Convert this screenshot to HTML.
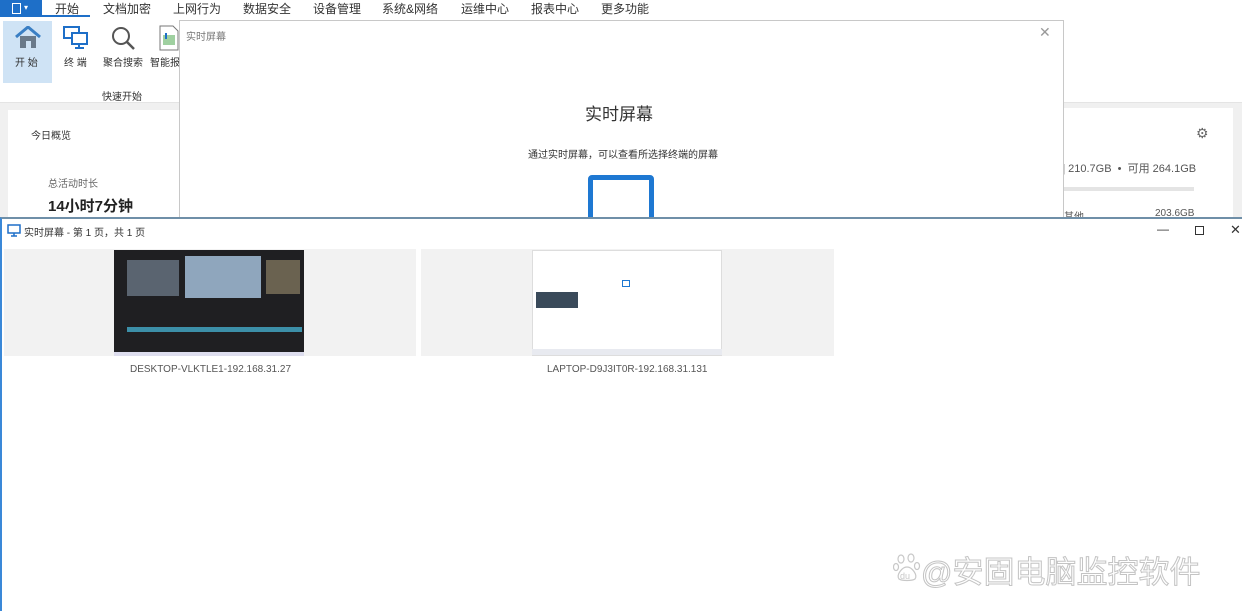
<!DOCTYPE html>
<html><head><meta charset="utf-8"><style>
*{margin:0;padding:0;box-sizing:border-box}
body{width:1242px;height:611px;position:relative;overflow:hidden;background:#fff;font-family:"Liberation Sans","Noto Sans CJK SC",sans-serif;color:#333}
.a{position:absolute}
.menu span{position:absolute;top:0px;font-size:12px;color:#333}
</style></head><body>
<!-- top menu -->
<div class="a" style="left:0;top:0;width:42px;height:17px;background:#1e6fc8"></div>
<div class="a" style="left:12px;top:3px;width:9px;height:11px;border:1px solid #fff"></div>
<div class="a" style="left:24px;top:3px;color:#fff;font-size:8px">▾</div>
<div class="a" style="left:42px;top:15px;width:48px;height:2px;background:#1e6fc8"></div>
<div class="menu">
<span style="left:55px">开始</span><span style="left:103px">文档加密</span><span style="left:173px">上网行为</span><span style="left:243px">数据安全</span><span style="left:313px">设备管理</span><span style="left:382px">系统&amp;网络</span><span style="left:461px">运维中心</span><span style="left:531px">报表中心</span><span style="left:601px">更多功能</span>
</div>
<!-- ribbon -->
<div class="a" style="left:0;top:17px;width:1242px;height:86px;background:#fff;border-bottom:1px solid #e4e4e4"></div>
<div class="a" style="left:3px;top:21px;width:49px;height:62px;background:#cfe3f5"></div>
<svg class="a" style="left:15px;top:26px" width="26" height="22"><path d="M1 11 L13 1 L25 11" stroke="#3a7fc4" stroke-width="3" fill="none"/><rect x="5" y="10" width="16" height="12" fill="#6a7a8a"/><rect x="11" y="15" width="5" height="7" fill="#cfe3f5"/></svg>
<div class="a" style="left:15px;top:54px;font-size:10px">开 始</div>
<svg class="a" style="left:63px;top:26px" width="26" height="24"><rect x="1" y="1" width="15" height="11" fill="none" stroke="#1e6fc8" stroke-width="2"/><rect x="9" y="7" width="15" height="11" fill="#fff" stroke="#1e6fc8" stroke-width="2"/><path d="M12 22h9M16 18v4" stroke="#1e6fc8" stroke-width="2"/></svg>
<div class="a" style="left:64px;top:54px;font-size:10px">终 端</div>
<svg class="a" style="left:110px;top:25px" width="26" height="26"><circle cx="11" cy="11" r="8" fill="none" stroke="#555" stroke-width="2"/><path d="M17 17l7 7" stroke="#555" stroke-width="2.5"/></svg>
<div class="a" style="left:103px;top:54px;font-size:10px">聚合搜索</div>
<svg class="a" style="left:159px;top:25px" width="20" height="26"><path d="M1 1h13l5 5v19H1z" fill="#fff" stroke="#777"/><rect x="4" y="10" width="12" height="10" fill="#9fd0a0"/><rect x="6" y="8" width="2" height="6" fill="#1e6fc8"/></svg>
<div class="a" style="left:150px;top:54px;font-size:10px">智能报</div>
<div class="a" style="left:102px;top:88px;font-size:10px">快速开始</div>
<!-- gray body -->
<div class="a" style="left:0;top:103px;width:1242px;height:114px;background:#f0f0f0"></div>
<div class="a" style="left:8px;top:110px;width:180px;height:107px;background:#fff"></div>
<div class="a" style="left:1063px;top:108px;width:170px;height:109px;background:#fff"></div>
<div class="a" style="left:31px;top:127px;font-size:10px">今日概览</div>
<div class="a" style="left:48px;top:175px;font-size:10px;color:#666">总活动时长</div>
<div class="a" style="left:48px;top:195px;font-size:15px;font-weight:bold;color:#222">14小时7分钟</div>
<div class="a" style="left:1196px;top:125px;font-size:14px;color:#666">⚙</div>
<div class="a" style="left:1062px;top:160px;font-size:11px;color:#555;white-space:nowrap">] 210.7GB &nbsp;•&nbsp; 可用 264.1GB</div>
<div class="a" style="left:1064px;top:187px;width:130px;height:4px;background:#e4e4e4"></div>
<div class="a" style="left:1064px;top:208px;font-size:10px;color:#555">其他</div>
<div class="a" style="left:1155px;top:208px;font-size:10px;color:#555">203.6GB</div>
<!-- dialog -->
<div class="a" style="left:179px;top:20px;width:885px;height:200px;background:#fff;border:1px solid #c8c8c8"></div>
<div class="a" style="left:186px;top:28px;font-size:10px;color:#777">实时屏幕</div>
<div class="a" style="left:1039px;top:24px;font-size:14px;color:#999">✕</div>
<div class="a" style="left:585px;top:100px;font-size:17px;color:#333">实时屏幕</div>
<div class="a" style="left:528px;top:146px;font-size:10px;color:#333">通过实时屏幕，可以查看所选择终端的屏幕</div>
<div class="a" style="left:588px;top:175px;width:66px;height:50px;border:5px solid #1e78d2;border-radius:4px"></div>
<!-- bottom window -->
<div class="a" style="left:0;top:217px;width:1242px;height:394px;background:#fff;border-top:2px solid #6f8fa8;border-left:2px solid #3a88d8"></div>
<svg class="a" style="left:7px;top:224px" width="14" height="13"><rect x="1" y="1" width="12" height="8" fill="none" stroke="#1e6fc8" stroke-width="1.5"/><path d="M4 12h6M7 9v3" stroke="#1e6fc8" stroke-width="1.5"/></svg>
<div class="a" style="left:24px;top:224px;font-size:10px;color:#333">实时屏幕 - 第 1 页，共 1 页</div>
<div class="a" style="left:1157px;top:222px;font-size:12px;color:#333">—</div>
<div class="a" style="left:1195px;top:226px;width:9px;height:9px;border:1px solid #333"></div>
<div class="a" style="left:1230px;top:222px;font-size:13px;color:#333">✕</div>
<!-- thumbs -->
<div class="a" style="left:4px;top:249px;width:412px;height:107px;background:#f2f2f2"></div>
<div class="a" style="left:114px;top:250px;width:190px;height:102px;background:#1f1f22"></div>
<div class="a" style="left:185px;top:256px;width:76px;height:42px;background:#8fa6bd"></div>
<div class="a" style="left:127px;top:260px;width:52px;height:36px;background:#5a6470"></div>
<div class="a" style="left:266px;top:260px;width:34px;height:34px;background:#6a6250"></div>
<div class="a" style="left:127px;top:327px;width:175px;height:5px;background:#3c8fa8"></div>
<div class="a" style="left:114px;top:352px;width:190px;height:4px;background:#dde"></div>
<div class="a" style="left:130px;top:364px;font-size:10px;color:#555">DESKTOP-VLKTLE1-192.168.31.27</div>
<div class="a" style="left:421px;top:249px;width:413px;height:107px;background:#f2f2f2"></div>
<div class="a" style="left:532px;top:250px;width:190px;height:106px;background:#fff;border:1px solid #ddd"></div>
<div class="a" style="left:536px;top:292px;width:42px;height:16px;background:#3a4a5a"></div>
<div class="a" style="left:622px;top:280px;width:8px;height:7px;border:1px solid #1e78d2"></div>
<div class="a" style="left:532px;top:349px;width:190px;height:6px;background:#e8eaf0"></div>
<div class="a" style="left:547px;top:364px;font-size:10px;color:#555">LAPTOP-D9J3IT0R-192.168.31.131</div>
<!-- watermark -->
<svg class="a" style="left:893px;top:553px" width="28" height="30"><g fill="none" stroke="#c8c8c8" stroke-width="1.2"><ellipse cx="8" cy="6" rx="3" ry="4"/><ellipse cx="18" cy="5" rx="3" ry="4"/><ellipse cx="3" cy="14" rx="2.5" ry="3.5"/><ellipse cx="24" cy="13" rx="2.5" ry="3.5"/><path d="M6 26c-3-4 3-12 8-12s11 8 8 12c-3 2-13 2-16 0z"/></g><text x="7" y="26" font-size="9" fill="#c8c8c8" font-family="Liberation Sans">du</text></svg>
<div class="a" style="left:921px;top:547px;font-size:31px;color:#fff;-webkit-text-stroke:1px #c4c4c4;white-space:nowrap">@安固电脑监控软件</div>
</body></html>
